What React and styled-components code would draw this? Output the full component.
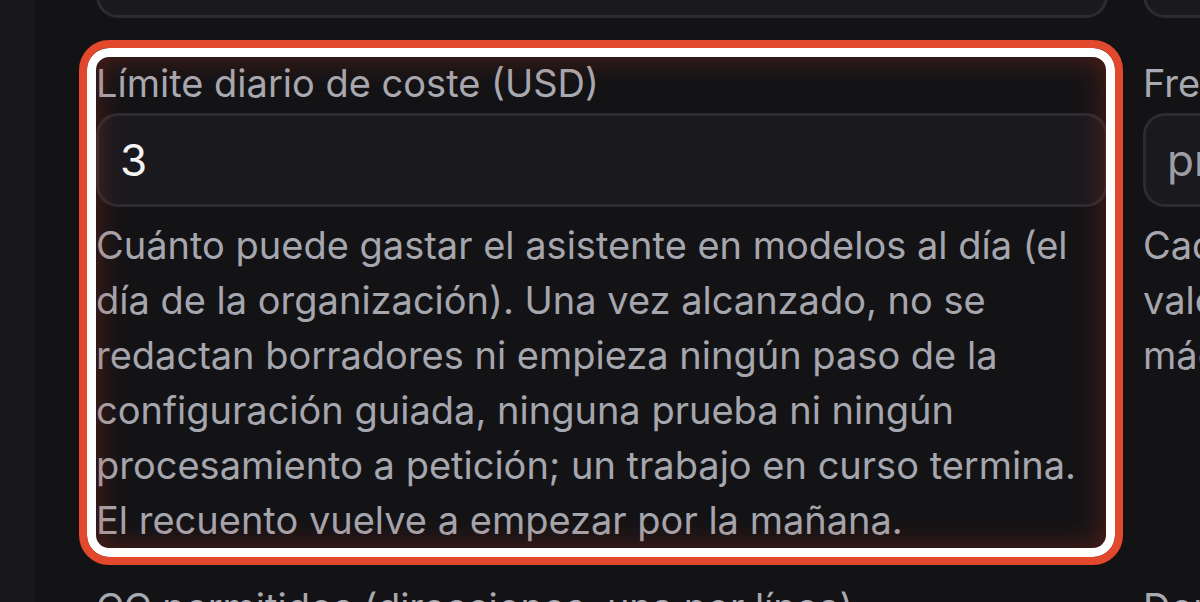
import React from "react";
import styled, { createGlobalStyle, css } from "styled-components";

const GlobalStyle = createGlobalStyle`
  html, body {
    margin: 0;
    padding: 0;
    background: #131316;
  }
  body {
    font-family: Inter, "Noto Sans", "Liberation Sans", sans-serif;
    overflow: hidden;
  }
  * { box-sizing: border-box; }
`;

const Page = styled.div`
  display: flex;
  width: 1200px;
  height: 602px;
  overflow: hidden;
  background: #131316;
`;

const Sidebar = styled.aside`
  flex: 0 0 35px;
  background: #18181b;
`;

const Main = styled.main`
  flex: 1;
  min-width: 0;
  padding-left: 61px;
  overflow: hidden;
`;

const Scrolled = styled.div`
  margin-top: -132px;
  display: flex;
  flex-direction: column;
`;

const Row = styled.div`
  display: grid;
  grid-template-columns: 1012px 1012px;
  column-gap: 35px;
  margin-bottom: ${(p) => (p.$gap ? p.$gap : 33)}px;
`;

const Field = styled.div`
  position: relative;
  display: flex;
  flex-direction: column;
  ${(p) =>
    p.$highlighted &&
    css`
      &::after {
        content: "";
        position: absolute;
        top: -17px;
        left: -17px;
        right: -15px;
        bottom: -17px;
        border: 8px solid #e2482b;
        border-radius: 30px;
        box-shadow: inset 0 0 0 9px #ffffff,
          inset 0 0 30px 10px rgba(200, 60, 30, 0.34);
        pointer-events: none;
      }
    `}
`;

const Label = styled.label`
  font-size: 38px;
  line-height: 52px;
  margin-bottom: 4px;
  color: #a9a9b1;
  white-space: nowrap;
`;

const Input = styled.input`
  width: 100%;
  height: 94px;
  padding: 0 21px;
  border: 3px solid #2b2b31;
  border-radius: 22px;
  background: #1a1a1e;
  color: #f4f4f5;
  font-family: inherit;
  font-size: 44px;
  outline: none;
  &::placeholder {
    color: #9d9da6;
  }
`;

const Hint = styled.p`
  margin: 11px 0 0;
  font-size: 38px;
  line-height: 55px;
  color: #a6a6ae;
`;

export default function App() {
  return (
    <>
      <GlobalStyle />
      <Page>
        <Sidebar />
        <Main>
          <Scrolled>
            <Row $gap={39}>
              <Field>
                <Label>Modelo del asistente</Label>
                <Input defaultValue="" readOnly />
              </Field>
              <Field>
                <Label>Zona horaria</Label>
                <Input defaultValue="" readOnly />
              </Field>
            </Row>
            <Row>
              <Field $highlighted>
                <Label>Límite diario de coste (USD)</Label>
                <Input defaultValue="3" readOnly />
                <Hint>
                  Cuánto puede gastar el asistente en modelos al día (el día
                  de la organización). Una vez alcanzado, no se redactan
                  borradores ni empieza ningún paso de la configuración
                  guiada, ninguna prueba ni ningún procesamiento a petición;
                  un trabajo en curso termina. El recuento vuelve a empezar
                  por la mañana.
                </Hint>
              </Field>
              <Field>
                <Label>Frecuencia de revisión (minutos)</Label>
                <Input placeholder="predeterminado: 15" readOnly />
                <Hint>
                  Cada cuántos minutos se busca correo nuevo. Los valores
                  bajos responden antes, aunque consumen máquina y cuota.
                </Hint>
              </Field>
            </Row>
            <Row>
              <Field>
                <Label>CC permitidos (direcciones, una por línea)</Label>
                <Input readOnly />
              </Field>
              <Field>
                <Label>Dominios permitidos</Label>
                <Input readOnly />
              </Field>
            </Row>
          </Scrolled>
        </Main>
      </Page>
    </>
  );
}
